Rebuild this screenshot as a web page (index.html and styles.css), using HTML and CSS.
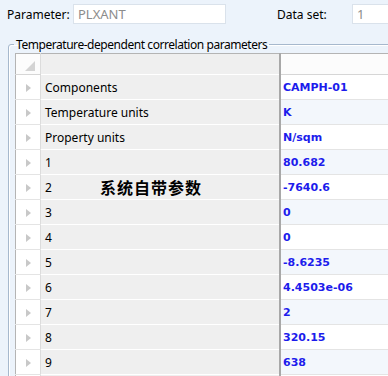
FILE: index.html
```html
<!DOCTYPE html>
<html lang="en">
	<head>
		<meta charset="utf-8">
		<title>PLXANT parameters</title>
		<link rel="stylesheet" href="styles.css">
	</head>
	<body>

		<!--
			parameter name and data set inputs
		-->

		<div class="top">
			<span class="field-label">Parameter:</span>
			<div class="input input-param">PLXANT</div>
			<span class="field-label set-label">Data set:</span>
			<div class="input input-set">1</div>
		</div>

		<!--
			group box holding the parameter grid
		-->

		<fieldset class="group">
			<legend>Temperature-dependent correlation parameters</legend>

			<table class="grid">
				<tr class="head">
					<td class="rowhead corner">
						<svg width="11" height="11" viewBox="0 0 11 11"><polygon points="10,0 10,10 0,10" fill="#d4d4d4"/></svg>
					</td>
					<td class="label"></td>
					<td class="value"></td>
				</tr>
				<tr>
					<td class="rowhead"><i class="tri"></i></td>
					<td class="label">Components</td>
					<td class="value">CAMPH-01</td>
				</tr>
				<tr class="alt">
					<td class="rowhead"><i class="tri"></i></td>
					<td class="label">Temperature units</td>
					<td class="value">K</td>
				</tr>
				<tr>
					<td class="rowhead"><i class="tri"></i></td>
					<td class="label">Property units</td>
					<td class="value">N/sqm</td>
				</tr>
				<tr class="alt">
					<td class="rowhead"><i class="tri"></i></td>
					<td class="label">1</td>
					<td class="value">80.682</td>
				</tr>
				<tr>
					<td class="rowhead"><i class="tri"></i></td>
					<td class="label">2</td>
					<td class="value">-7640.6</td>
				</tr>
				<tr class="alt">
					<td class="rowhead"><i class="tri"></i></td>
					<td class="label">3</td>
					<td class="value">0</td>
				</tr>
				<tr>
					<td class="rowhead"><i class="tri"></i></td>
					<td class="label">4</td>
					<td class="value">0</td>
				</tr>
				<tr class="alt">
					<td class="rowhead"><i class="tri"></i></td>
					<td class="label">5</td>
					<td class="value">-8.6235</td>
				</tr>
				<tr>
					<td class="rowhead"><i class="tri"></i></td>
					<td class="label">6</td>
					<td class="value">4.4503e-06</td>
				</tr>
				<tr class="alt">
					<td class="rowhead"><i class="tri"></i></td>
					<td class="label">7</td>
					<td class="value">2</td>
				</tr>
				<tr>
					<td class="rowhead"><i class="tri"></i></td>
					<td class="label">8</td>
					<td class="value">320.15</td>
				</tr>
				<tr class="alt">
					<td class="rowhead"><i class="tri"></i></td>
					<td class="label">9</td>
					<td class="value">638</td>
				</tr>
				<tr>
					<td class="rowhead"></td>
					<td class="label"></td>
					<td class="value"></td>
				</tr>
			</table>
		</fieldset>

		<!--
			annotation written over the grid
		-->

		<div class="note">系统自带参数</div>

	</body>
</html>
```

FILE: styles.css
```css
/*
	page background and base font
*/

body {
	margin: 0;
	background-color: #ecf3fb;
	font-family: "Noto Sans", "Open Sans", sans-serif;
	font-size: 12px;
	color: #000;
	overflow: hidden;
	position: relative;
	height: 376px;
}

/*
	top inputs row
*/

.top {
	display: flex;
	align-items: center;
	padding: 4px 0 0 7px;
	height: 20px;
}

.field-label {
	width: 66px;
	flex: none;
}

.set-label {
	margin-left: 51px;
	width: 75px;
}

.input {
	box-sizing: border-box;
	flex: none;
	height: 20px;
	background-color: #fff;
	border: 1px solid #dae2eb;
	color: #8c8c8c;
	padding: 0 4px;
	line-height: 18px;
	font-size: 13px;
}

.input-param {
	width: 153px;
}

.input-set {
	width: 60px;
}

/*
	group box
*/

.group {
	margin: 12px 0 0 8px;
	padding: 0 0 0 6px;
	width: 420px;
	border: 1px solid #a6b8cd;
	border-radius: 3px;
	box-shadow: inset 1px 1px 0 #fff;
}

.group legend {
	padding: 0 2px;
	margin-left: -1px;
	font-size: 12px;
	letter-spacing: -0.45px;
	line-height: 17px;
}

/*
	parameter grid
*/

.grid {
	border-collapse: collapse;
	border-top: 1px solid #b4b4b4;
	border-left: 1px solid #b4b4b4;
	background-color: #fff;
}

.grid td {
	height: 24px;
	padding: 0;
	border-bottom: 1px solid #e4e4e4;
}

.grid .head td {
	height: 20px;
	background-color: #fcfcfc;
	border-bottom: 1px solid #d6d6d6;
}

.rowhead {
	width: 24px;
	background-color: #fff;
	border-right: 1px solid #dcdcdc;
	text-align: center;
}

.corner svg {
	display: block;
	margin: 5px 4px 0 auto;
}

.tri {
	display: inline-block;
	width: 0;
	height: 0;
	border-top: 4px solid transparent;
	border-bottom: 4px solid transparent;
	border-left: 5px solid #c8c8c8;
	vertical-align: middle;
	margin-left: 0;
}

.grid td.label {
	width: 234px;
	padding-left: 4px;
	background-color: #efefef;
	border-bottom: 1px solid #fff;
	border-right: 2px solid #a8a8a8;
}

.grid td.value {
	width: 120px;
	padding-left: 2px;
	color: #1c1cec;
	font-family: "DejaVu Sans", Verdana, sans-serif;
	font-weight: bold;
	font-size: 11px;
}

.grid .alt td.value {
	background-color: #f3f7fc;
}

/*
	annotation over the grid
*/

.note {
	position: absolute;
	left: 100px;
	top: 175px;
	font-family: "Noto Sans CJK SC", sans-serif;
	font-weight: bold;
	font-size: 16px;
	letter-spacing: 1px;
}
```
